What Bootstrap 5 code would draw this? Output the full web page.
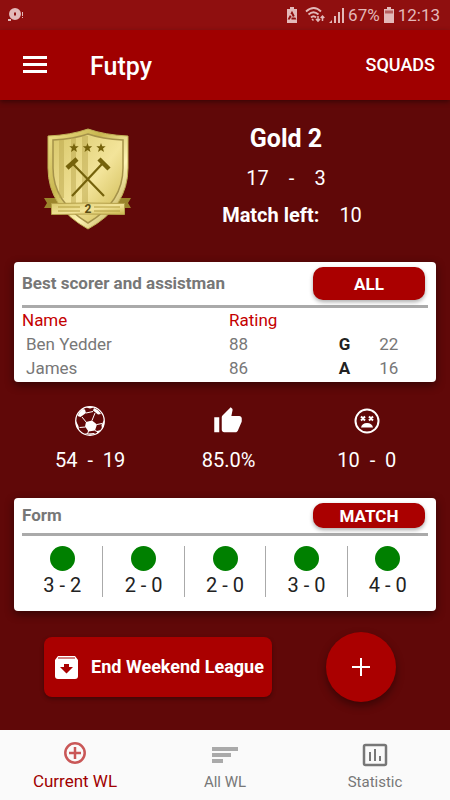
<!DOCTYPE html>
<html lang="en">
<head>
<meta charset="utf-8">
<meta name="viewport" content="width=device-width, initial-scale=1">
<title>Futpy</title>
<link href="https://cdn.jsdelivr.net/npm/bootstrap@5.3.0/dist/css/bootstrap.min.css" rel="stylesheet">
<style>
body{font-family:Roboto,"Liberation Sans",sans-serif;background:#600808;color:#fff;line-height:24px;font-size:17px}
svg{display:block;flex:none}
.status{height:30px;background:#8f0f0f;color:#e3b9b9;padding:0 10px 0 8px;font-size:17px}
.appbar{height:70px;background:#a00000;padding:0 15px 0 21px;box-shadow:0 2px 5px #0006;z-index:2}
.brand{font-size:25px;line-height:32px;font-weight:500;margin:4px 0 0 41px}
.squads{font-size:18px;font-weight:500}
.hero{padding:24px 10px 0 44px;height:162px}
.tier{font-size:25px;line-height:30px;font-weight:700;margin:0}
.num{font-size:20px}
.record{margin-top:12px;gap:20px}
.left{margin-top:13px;gap:20px;padding-left:12px}
.panel{background:#fff;border:0;border-radius:4px;margin:0 14px;padding:0 8px;box-shadow:0 3px 10px #0007;color:#777}
.panel h2{font-size:17px;line-height:24px;font-weight:700;margin:0}
.head{border-bottom:3px solid #aaa;padding:5px 3px 5px 0}
.red{background:#aa0000;border:0;color:#fff;font-weight:700;font-size:17px;line-height:24px;padding:0;box-shadow:0 2px 4px #0005}
.red:hover{background:#990000;color:#fff}
.pill{width:112px;border-radius:10px}
.tall{height:33px}
.short{height:25px}
.scorers{width:100%;table-layout:fixed;line-height:24px;margin-bottom:2px}
.scorers th{font-weight:400;color:#c40000}
.scorers td,.scorers th{padding:0}
.scorers td:first-child{padding-left:4px}
.scorers td b{color:#222}
.stats{height:116px;padding:24px 14px 0 21px}
.glyph{height:30px}
.stats .num{line-height:24px;margin-top:12px;white-space:pre}
.form-row{padding:10px 0 14px}
.result{font-size:20px;line-height:24px;color:#222;height:51px}
.result + .result{border-left:1px solid #aaa}
.dot{width:25px;height:25px;border-radius:50%;background:#008000;margin:0 auto 2px}
.actions{padding:21px 54px 24px 44px}
.end{width:228px;height:60px;border-radius:8px;gap:12px;font-size:18px}
.end svg{margin-left:2px}
.fab{width:70px;height:70px;border-radius:50%;box-shadow:0 4px 8px #0006}
.tabs{height:70px;background:#fafafa}
.tabs a{color:#777;font-size:15px;line-height:20px;text-decoration:none;padding-top:12px}
.tabs a.current{color:#a00000;font-size:17px;padding-top:10px}
.tabs svg{margin-bottom:5px}
.tabs a:not(.current) svg{margin-bottom:4px}
</style>
<script src="https://cdn.jsdelivr.net/npm/bootstrap@5.3.0/dist/js/bootstrap.bundle.min.js"></script>
</head>
<body class="d-flex flex-column min-vh-100">
<div class="status d-flex align-items-center">
  <svg width="16" height="14" viewBox="0 0 16 14" fill="#e3b9b9"><path fill-rule="evenodd" d="M7 0a6 6 0 1 1 0 12A6 6 0 0 1 7 0zM6 4.500v3h2v-3z"/><path d="M0 11h3v2H0zM14 4h1v4h-1zM14 9h1v1h-1z"/></svg>
  <svg class="ms-auto" width="10" height="16" viewBox="0 0 10 16"><path fill="#e3b9b9" d="M3 0h4v2h3v14H0V2h3z"/><path fill="none" stroke="#8f0f0f" stroke-width="2" stroke-dasharray="4 1.500" d="M5 6l2.800 5.500H2.200z"/></svg>
  <svg class="ms-2" width="20" height="16" viewBox="0 0 20 16" fill="none" stroke="#e3b9b9" stroke-width="1.800"><path d="M1 4.500q8-7 15 0M3.500 7.500q5-4.500 10 0M6 10.500q2.500-2.500 5 0"/><path stroke-width="1.500" d="M7 12l1.500 1.500M13 9v5M11 12l2 2.200 2-2.200M17.500 14V9M15.700 11l1.800-2 1.800 2"/></svg>
  <svg class="ms-1" width="15" height="16" viewBox="0 0 15 16" fill="#e3b9b9"><path d="M0 16l3-3v3zM5 9h2v7H5zM9 5h2v11H9zM13 1h2v15h-2z"/></svg>
  <span class="ms-1">67%</span>
  <svg class="mx-1" width="10" height="16" viewBox="0 0 10 16"><path fill="#e3b9b9" d="M3 0h4v2h3v14H0V2h3z"/><path fill="#b86060" d="M1 3.500h8v3H1z"/></svg>
  <span>12:13</span>
</div>
<header class="appbar d-flex align-items-center">
  <button class="btn p-0 border-0" aria-label="Menu"><svg width="28" height="20" viewBox="0 0 28 20" fill="#fff"><path d="M2 1h24v3H2zM2 8h24v3H2zM2 15h24v3H2z"/></svg></button>
  <h1 class="brand">Futpy</h1>
  <a href="#" class="squads ms-auto text-white text-decoration-none">SQUADS</a>
</header>
<main class="flex-grow-1">
  <section class="hero d-flex">
    <svg width="88" height="106" viewBox="44 124 88 106" role="img" aria-label="Gold 2 badge">
      <defs>
        <linearGradient id="gold" x1="0" y1="0" x2="1" y2="1"><stop offset="0" stop-color="#d8c76a"/><stop offset=".55" stop-color="#f3e49a"/><stop offset="1" stop-color="#cbb64c"/></linearGradient>
        <linearGradient id="rim" x1="0" y1="0" x2="1" y2="1"><stop offset="0" stop-color="#f0e18b"/><stop offset=".35" stop-color="#c9b750"/><stop offset=".65" stop-color="#fff4b5"/><stop offset="1" stop-color="#a58e30"/></linearGradient>
      </defs>
      <path fill="#9b852c" d="M44 198h15l3 10h-18l3-5zM131 198h-15l-3 10h18l-3-5z"/>
      <path fill="url(#rim)" stroke="#bfae55" d="M48 136q23-1 40-7 17 6 40 7v32q0 39-40 61-40-22-40-61z"/>
      <path fill="url(#gold)" stroke="#a5924a" stroke-width="1.500" d="M53 140q21-1 35-6 14 5 35 6v28q0 34-35 55-35-21-35-55z"/>
      <path fill="#bba74d" fill-opacity=".5" d="M59 140h5v58h-5zM71 138h5v65h-5zM82 136h6v67h-6z"/>
      <g fill="#75620b"><path id="star" d="M74 143l1.200 3.300h3.500l-2.700 2.200 1 3.500-3-2-3 2 1-3.500-2.700-2.200h3.500z"/><use href="#star" x="13.500"/><use href="#star" x="27"/></g>
      <g fill="none" stroke="#75620b"><path stroke-width="2.200" d="M72 196l30-32M104 196l-31-32"/><path stroke-width="4.500" d="M67 168l10-9M99 159l10 10"/></g>
      <path fill="url(#gold)" stroke="#b5a04a" d="M51.500 203.500q36.500-1 73 0v11q-36.500-1-73 0z"/>
      <path fill="none" stroke="#b29b3c" stroke-width="1.200" d="M58 207h22M94 207h26M58 211h22M94 211h26"/>
      <text x="88" y="213" text-anchor="middle" font-family="Roboto,sans-serif" font-size="12" font-weight="700" fill="#594b13">2</text>
    </svg>
    <div class="flex-grow-1 text-center">
      <h2 class="tier">Gold 2</h2>
      <div class="record num d-flex justify-content-center"><span>17</span><span>-</span><span>3</span></div>
      <div class="left num d-flex justify-content-center"><b>Match left:</b><span>10</span></div>
    </div>
  </section>
  <section class="panel card">
    <div class="head d-flex justify-content-between">
      <h2 class="pt-1">Best scorer and assistman</h2>
      <button class="btn red pill tall">ALL</button>
    </div>
    <table class="scorers">
      <colgroup><col style="width:51%"><col style="width:27%"><col style="width:10%"><col style="width:12%"></colgroup>
      <thead><tr><th>Name</th><th>Rating</th><th></th><th></th></tr></thead>
      <tbody><tr><td>Ben Yedder</td><td>88</td><td><b>G</b></td><td>22</td></tr>
      <tr><td>James</td><td>86</td><td><b>A</b></td><td>16</td></tr></tbody>
    </table>
  </section>
  <section class="stats row g-0 text-center">
    <div class="col">
      <div class="glyph d-flex justify-content-center align-items-center"><svg width="30" height="30" viewBox="0 0 30 30"><circle cx="15" cy="15" r="14.300" fill="none" stroke="#fff" stroke-width="1.300"/><path fill="#fff" d="M11 16l6-1.500 5 4-2 6-6.500 1-3.500-5zM10 3.500L11 7l-5.500 4-3-1q1-4 5-7zM19 2q5 2 7 6l-3 .5-5-4zM11 1.500q4-1.500 8 0l-4 1zM29 14q1 5-2 9l-.5-4zM1 15l2.500 5 .5 4Q0 20 1 15zM9 27l4 .5 6-.5 1 1q-6 2-11-1zM22 25l4-1-4 3.500z"/><path fill="none" stroke="#fff" d="M11 7l7-1.500M11.500 16.500L7 11M17 14.500L20 7M22 18.500l5-1M20 24.500l2 1M10.500 21l-6 .5M13.500 25l-1 3"/></svg></div>
      <div class="num">54  -  19</div>
    </div>
    <div class="col">
      <div class="glyph d-flex justify-content-center align-items-center"><svg width="30" height="30" viewBox="0 0 24 24" fill="#fff"><path d="M1 21h4V9H1v12zm22-11c0-1.100-.9-2-2-2h-6.310l.95-4.570.03-.32c0-.41-.17-.79-.44-1.060L14.170 1 7.590 7.590C7.220 7.950 7 8.450 7 9v10c0 1.100.9 2 2 2h9c.83 0 1.540-.5 1.840-1.220l3.020-7.050c.09-.23.14-.47.14-.73v-2z"/></svg></div>
      <div class="num">85.0%</div>
    </div>
    <div class="col">
      <div class="glyph d-flex justify-content-center align-items-center"><svg width="26" height="26" viewBox="0 0 26 26" fill="none" stroke="#fff"><circle cx="13" cy="13" r="11.500" stroke-width="2"/><path stroke-width="2" d="M7 8.500l4 4M11 8.500l-4 4M15 8.500l4 4M19 8.500l-4 4"/><path fill="#fff" stroke="none" d="M7 19.500q1-4.500 6-4.500t6 4.500z"/></svg></div>
      <div class="num">10  -  0</div>
    </div>
  </section>
  <section class="panel card">
    <div class="head d-flex justify-content-between">
      <h2>Form</h2>
      <button class="btn red pill short">MATCH</button>
    </div>
    <div class="form-row row g-0 text-center">
      <div class="col result"><div class="dot"></div>3 - 2</div>
      <div class="col result"><div class="dot"></div>2 - 0</div>
      <div class="col result"><div class="dot"></div>2 - 0</div>
      <div class="col result"><div class="dot"></div>3 - 0</div>
      <div class="col result"><div class="dot"></div>4 - 0</div>
    </div>
  </section>
  <section class="actions d-flex align-items-center justify-content-between">
    <button class="btn red end d-flex align-items-center justify-content-center"><svg width="25" height="25" viewBox="0 0 25 25"><path fill="#fff" d="M4 1h17l3 4v16q0 3-3 3H4q-3 0-3-3V5z"/><path fill="none" stroke="#aa0000" d="M4 3h17"/><path fill="#aa0000" d="M10 9h5v3h4l-6.500 6.500L6 12h4z"/></svg>End Weekend League</button>
    <button class="btn red fab d-flex align-items-center justify-content-center" aria-label="Add"><svg width="18" height="18" viewBox="0 0 18 18"><path stroke="#fff" stroke-width="2" d="M9 0v18M0 9h18"/></svg></button>
  </section>
</main>
<nav class="tabs row g-0">
  <a href="#" class="col current d-flex flex-column align-items-center"><svg width="24" height="26" viewBox="0 0 24 26" fill="none" stroke="#c95757"><circle cx="12" cy="13" r="9.700" stroke-width="2.500"/><path stroke-width="2.500" d="M12 7v12M6 13h12"/></svg>Current WL</a>
  <a href="#" class="col d-flex flex-column align-items-center"><svg width="26" height="26" viewBox="0 0 26 26" fill="#aaa"><path d="M0 5h26v4H0zM0 11h19v4H0zM0 17h11v4H0z"/></svg>All WL</a>
  <a href="#" class="col d-flex flex-column align-items-center"><svg width="26" height="26" viewBox="0 0 26 26" fill="none" stroke="#777"><rect x="2" y="3" width="22" height="20" rx="1.500" stroke-width="2.500"/><path stroke-width="2" d="M8 10v9M13 7v12M18 14v5"/></svg>Statistic</a>
</nav>
</body>
</html>
